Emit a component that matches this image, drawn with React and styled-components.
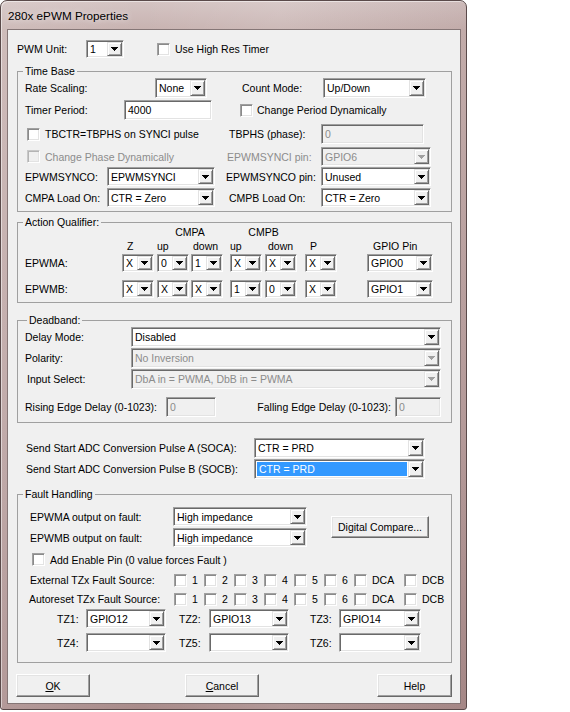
import React from "react";
import styled, { createGlobalStyle } from "styled-components";

const GlobalStyle = createGlobalStyle`
  html, body { margin: 0; padding: 0; background: #fff; }
  body {
    font-family: "Liberation Sans", Arial, sans-serif;
    font-size: 10.5px;
    color: #000;
  }
  #root { width: 570px; height: 712px; overflow: hidden; }
`;

const Window = styled.div`
  box-sizing: border-box;
  width: 467px;
  height: 710px;
  display: flex;
  flex-direction: column;
  padding: 0 5px 5px 6px;
  border: 1px solid #5a4a4a;
  border-radius: 7px 7px 3px 3px;
  background:
    linear-gradient(90deg, rgba(255,255,255,0.12), rgba(255,255,255,0) 30%, rgba(255,255,255,0.1) 60%, rgba(120,80,80,0.08)),
    linear-gradient(180deg, #d4c4c3 0px, #c8b3b1 28px, #b9a09f 60%, #a98c8b 100%);
  box-shadow: inset 1px 1px 0 rgba(255,255,255,0.5);
`;

const TitleBar = styled.div`
  flex: none;
  height: 28px;
  display: flex;
  align-items: center;
  padding: 1px 0 0 1px;
  box-sizing: border-box;
  font-size: 11.7px;
  color: #000;
  text-shadow: 0 0 6px rgba(255,255,255,0.8);
`;

const Client = styled.div`
  flex: 1;
  display: flex;
  flex-direction: column;
  background: #f0f0f0;
  border: 1px solid #857676;
  padding: 0 8px 6px 9px;
`;

const Group = styled.fieldset`
  margin: ${(p) => p.$mt || 0}px 0 0 0;
  padding: 0 7px ${(p) => p.$pb || 0}px 7px;
  border: 1px solid #a0a0a0;
  min-width: 0;
  flex: none;
`;

const Legend = styled.legend`
  padding: 0 2px;
  margin-left: ${(p) => (p.$ml === undefined ? -2 : p.$ml)}px;
  line-height: 14px;
  height: 14px;
`;

const Row = styled.div`
  display: flex;
  align-items: center;
  flex: none;
  height: ${(p) => p.$h || 18}px;
  margin-top: ${(p) => p.$mt || 0}px;
`;

const Label = styled.span`
  flex: none;
  box-sizing: border-box;
  width: ${(p) => (p.$w ? `${p.$w}px` : "auto")};
  margin-left: ${(p) => p.$ml || 0}px;
  padding-right: ${(p) => p.$pr || 0}px;
  text-align: ${(p) => p.$align || "left"};
  color: ${(p) => (p.$disabled ? "#8c8c8c" : "#000")};
  white-space: nowrap;
`;

const Sunken = styled.div`
  flex: none;
  box-sizing: border-box;
  width: ${(p) => p.$w}px;
  height: ${(p) => p.$h || 18}px;
  margin-left: ${(p) => p.$ml || 0}px;
  display: flex;
  align-items: stretch;
  background: ${(p) => (p.$disabled ? "#f0f0f0" : "#fff")};
  border: 1px solid;
  border-color: #a0a0a0 #fff #fff #a0a0a0;
  box-shadow: inset 1px 1px 0 #696969, inset -1px -1px 0 #e3e3e3;
  padding: 1px;
`;

const FieldText = styled.div`
  flex: 1;
  min-width: 0;
  display: flex;
  align-items: center;
  padding-left: 2px;
  overflow: hidden;
  white-space: nowrap;
  color: ${(p) => (p.$disabled ? "#8c8c8c" : p.$selected ? "#fff" : "#000")};
  background: ${(p) => (p.$selected ? "#3399ff" : "transparent")};
  margin: ${(p) => (p.$selected ? "1px 1px 1px 1px" : "0")};
`;

const DropButton = styled.div`
  flex: none;
  width: 15px;
  box-sizing: border-box;
  background: #f0f0f0;
  border: 1px solid;
  border-color: #e3e3e3 #696969 #696969 #e3e3e3;
  box-shadow: inset 1px 1px 0 #fff, inset -1px -1px 0 #a0a0a0;
  display: flex;
  align-items: center;
  justify-content: center;
`;

const CheckBox = styled.span`
  flex: none;
  box-sizing: border-box;
  width: 13px;
  height: 13px;
  margin-left: ${(p) => p.$ml || 0}px;
  background: ${(p) => (p.$disabled ? "#f0f0f0" : "#fff")};
  border: 1px solid;
  border-color: ${(p) => (p.$disabled ? "#c8c8c8 #fff #fff #c8c8c8" : "#a0a0a0 #fff #fff #a0a0a0")};
  box-shadow: ${(p) =>
    p.$disabled
      ? "inset 1px 1px 0 #b4b4b4, inset -1px -1px 0 #e3e3e3"
      : "inset 1px 1px 0 #8a8a8a, inset -1px -1px 0 #e3e3e3"};
`;

const CheckItemBox = styled.div`
  flex: none;
  display: flex;
  align-items: center;
  width: ${(p) => p.$w}px;
`;

const PushButton = styled.div`
  flex: none;
  box-sizing: border-box;
  width: ${(p) => p.$w}px;
  height: ${(p) => p.$h || 23}px;
  margin-left: ${(p) => p.$ml || 0}px;
  background: #f0f0f0;
  border: 1px solid;
  border-color: #fff #696969 #696969 #fff;
  box-shadow: inset -1px -1px 0 #a0a0a0, inset 1px 1px 0 #e3e3e3;
  display: flex;
  align-items: center;
  justify-content: center;
  white-space: nowrap;
`;

const StackCol = styled.div`
  display: flex;
  flex-direction: column;
  gap: 2px;
`;

const ButtonRow = styled.div`
  display: flex;
  align-items: center;
  flex: none;
  margin-top: 11px;
  margin-left: -1px;
`;

const Arrow = ({ disabled }) => (
  <svg width="7" height="4" viewBox="0 0 7 4" shapeRendering="crispEdges">
    <path
      d="M0 0h7v1H0zM1 1h5v1H1zM2 2h3v1H2zM3 3h1v1H3z"
      fill={disabled ? "#a0a0a0" : "#000"}
    />
  </svg>
);

const Combo = ({ w, h, ml, value = "", disabled, selected }) => (
  <Sunken $w={w} $h={h} $ml={ml} $disabled={disabled}>
    <FieldText $disabled={disabled} $selected={selected}>
      {value}
    </FieldText>
    <DropButton>
      <Arrow disabled={disabled} />
    </DropButton>
  </Sunken>
);

const TextBox = ({ w, h, ml, value, disabled }) => (
  <Sunken $w={w} $h={h} $ml={ml} $disabled={disabled}>
    <FieldText $disabled={disabled}>{value}</FieldText>
  </Sunken>
);

const CheckItem = ({ w, label }) => (
  <CheckItemBox $w={w}>
    <CheckBox />
    <Label $ml={5}>{label}</Label>
  </CheckItemBox>
);

const SOURCES = [
  { w: 30, label: "1" },
  { w: 30, label: "2" },
  { w: 30, label: "3" },
  { w: 30, label: "4" },
  { w: 30, label: "5" },
  { w: 30, label: "6" },
  { w: 50, label: "DCA" },
  { w: 40, label: "DCB" },
];

const AQ_ROWS = [
  { name: "EPWMA:", vals: ["X", "0", "1", "X", "X", "X"], gpio: "GPIO0" },
  { name: "EPWMB:", vals: ["X", "X", "X", "1", "0", "X"], gpio: "GPIO1" },
];
const AQ_GAPS = [0, 3, 2, 7, 3, 8];

export default function App() {
  return (
    <>
      <GlobalStyle />
      <Window>
        <TitleBar>280x ePWM Properties</TitleBar>
        <Client>
          <Row $h={18} $mt={10}>
            <Label $w={69}>PWM Unit:</Label>
            <Combo w={38} h={18} value="1" />
            <CheckBox $ml={33} />
            <Label $ml={5}>Use High Res Timer</Label>
          </Row>

          <Group $mt={6} $pb={4}>
            <Legend>Time Base</Legend>
            <Row $h={20}>
              <Label $w={130}>Rate Scaling:</Label>
              <Combo w={52} h={20} value="None" />
              <Label $ml={35} $w={81}>Count Mode:</Label>
              <Combo w={103} h={20} value="Up/Down" />
            </Row>
            <Row $h={20} $mt={2}>
              <Label $w={99}>Timer Period:</Label>
              <TextBox w={88} h={20} value="4000" />
              <CheckBox $ml={28} />
              <Label $ml={4}>Change Period Dynamically</Label>
            </Row>
            <Row $h={20} $mt={4}>
              <CheckBox $ml={2} />
              <Label $ml={5} $w={184}>TBCTR=TBPHS on SYNCI pulse</Label>
              <Label $w={92}>TBPHS (phase):</Label>
              <TextBox w={103} h={20} value="0" disabled />
            </Row>
            <Row $h={19} $mt={3}>
              <CheckBox $ml={2} $disabled />
              <Label $ml={5} $w={182} $disabled>Change Phase Dynamically</Label>
              <Label $w={94} $disabled>EPWMSYNCI pin:</Label>
              <Combo w={110} h={19} value="GPIO6" disabled />
            </Row>
            <Row $h={19} $mt={1}>
              <Label $w={82}>EPWMSYNCO:</Label>
              <Combo w={108} h={19} value="EPWMSYNCI" />
              <Label $ml={11} $w={95}>EPWMSYNCO pin:</Label>
              <Combo w={110} h={19} value="Unused" />
            </Row>
            <Row $h={19} $mt={2}>
              <Label $w={82}>CMPA Load On:</Label>
              <Combo w={108} h={19} value="CTR = Zero" />
              <Label $ml={14} $w={92}>CMPB Load On:</Label>
              <Combo w={110} h={19} value="CTR = Zero" />
            </Row>
          </Group>

          <Group $mt={3} $pb={4}>
            <Legend>Action Qualifier:</Legend>
            <Row $h={13} $mt={-4}>
              <Label $w={132} />
              <Label $w={66} $align="center">CMPA</Label>
              <Label $ml={7} $w={67} $align="center">CMPB</Label>
            </Row>
            <Row $h={13} $mt={1}>
              <Label $w={102} />
              <Label $w={30}>Z</Label>
              <Label $w={36}>up</Label>
              <Label $w={37}>down</Label>
              <Label $w={38}>up</Label>
              <Label $w={42}>down</Label>
              <Label $w={63}>P</Label>
              <Label>GPIO Pin</Label>
            </Row>
            {AQ_ROWS.map((r, i) => (
              <Row key={r.name} $h={18} $mt={i === 0 ? 2 : 8}>
                <Label $w={97}>{r.name}</Label>
                {r.vals.map((v, j) => (
                  <Combo key={j} w={32} h={18} ml={AQ_GAPS[j]} value={v} />
                ))}
                <Combo w={66} h={18} ml={30} value={r.gpio} />
              </Row>
            ))}
          </Group>

          <Group $mt={10} $pb={5}>
            <Legend $ml={2}>Deadband:</Legend>
            <Row $h={20}>
              <Label $w={106}>Delay Mode:</Label>
              <Combo w={310} h={20} value="Disabled" />
            </Row>
            <Row $h={20} $mt={1}>
              <Label $w={106}>Polarity:</Label>
              <Combo w={310} h={20} value="No Inversion" disabled />
            </Row>
            <Row $h={20} $mt={1}>
              <Label $ml={2} $w={104}>Input Select:</Label>
              <Combo w={310} h={20} value="DbA in = PWMA, DbB in = PWMA" disabled />
            </Row>
            <Row $h={20} $mt={8}>
              <Label $w={141}>Rising Edge Delay (0-1023):</Label>
              <TextBox w={50} h={20} value="0" disabled />
              <Label $w={179} $pr={4} $align="right">Falling Edge Delay (0-1023):</Label>
              <TextBox w={46} h={20} value="0" disabled />
            </Row>
          </Group>

          <Row $h={20} $mt={15}>
            <Label $ml={9} $w={228}>Send Start ADC Conversion Pulse A (SOCA):</Label>
            <Combo w={171} h={20} value="CTR = PRD" />
          </Row>
          <Row $h={20} $mt={1}>
            <Label $ml={9} $w={228}>Send Start ADC Conversion Pulse B (SOCB):</Label>
            <Combo w={171} h={20} value="CTR = PRD" selected />
          </Row>

          <Group $mt={8} $pb={10}>
            <Legend>Fault Handling</Legend>
            <Row $h={42} $mt={5}>
              <StackCol>
                <Row $h={19}>
                  <Label $ml={5} $w={143}>EPWMA output on fault:</Label>
                  <Combo w={134} h={19} value="High impedance" />
                </Row>
                <Row $h={19}>
                  <Label $ml={5} $w={143}>EPWMB output on fault:</Label>
                  <Combo w={134} h={19} value="High impedance" />
                </Row>
              </StackCol>
              <PushButton $w={98} $h={22} $ml={24}>Digital Compare...</PushButton>
            </Row>
            <Row $h={13} $mt={5}>
              <CheckBox $ml={7} />
              <Label $ml={5}>Add Enable Pin (0 value forces Fault )</Label>
            </Row>
            <Row $h={16} $mt={6}>
              <Label $ml={5} $w={144}>External TZx Fault Source:</Label>
              {SOURCES.map((s) => (
                <CheckItem key={s.label} w={s.w} label={s.label} />
              ))}
            </Row>
            <Row $h={16} $mt={3}>
              <Label $ml={4} $w={145}>Autoreset TZx Fault Source:</Label>
              {SOURCES.map((s) => (
                <CheckItem key={s.label} w={s.w} label={s.label} />
              ))}
            </Row>
            <Row $h={19} $mt={2}>
              <Label $ml={32} $w={29}>TZ1:</Label>
              <Combo w={80} h={19} value="GPIO12" />
              <Label $ml={13} $w={30}>TZ2:</Label>
              <Combo w={80} h={19} value="GPIO13" />
              <Label $ml={21} $w={29}>TZ3:</Label>
              <Combo w={82} h={19} value="GPIO14" />
            </Row>
            <Row $h={19} $mt={5}>
              <Label $ml={32} $w={29}>TZ4:</Label>
              <Combo w={80} h={19} />
              <Label $ml={13} $w={30}>TZ5:</Label>
              <Combo w={80} h={19} />
              <Label $ml={21} $w={29}>TZ6:</Label>
              <Combo w={82} h={19} />
            </Row>
          </Group>

          <ButtonRow>
            <PushButton $w={74}>
              <span><u>O</u>K</span>
            </PushButton>
            <PushButton $w={74} $ml={95}>
              <span><u>C</u>ancel</span>
            </PushButton>
            <PushButton $w={75} $ml={118}>Help</PushButton>
          </ButtonRow>
        </Client>
      </Window>
    </>
  );
}
